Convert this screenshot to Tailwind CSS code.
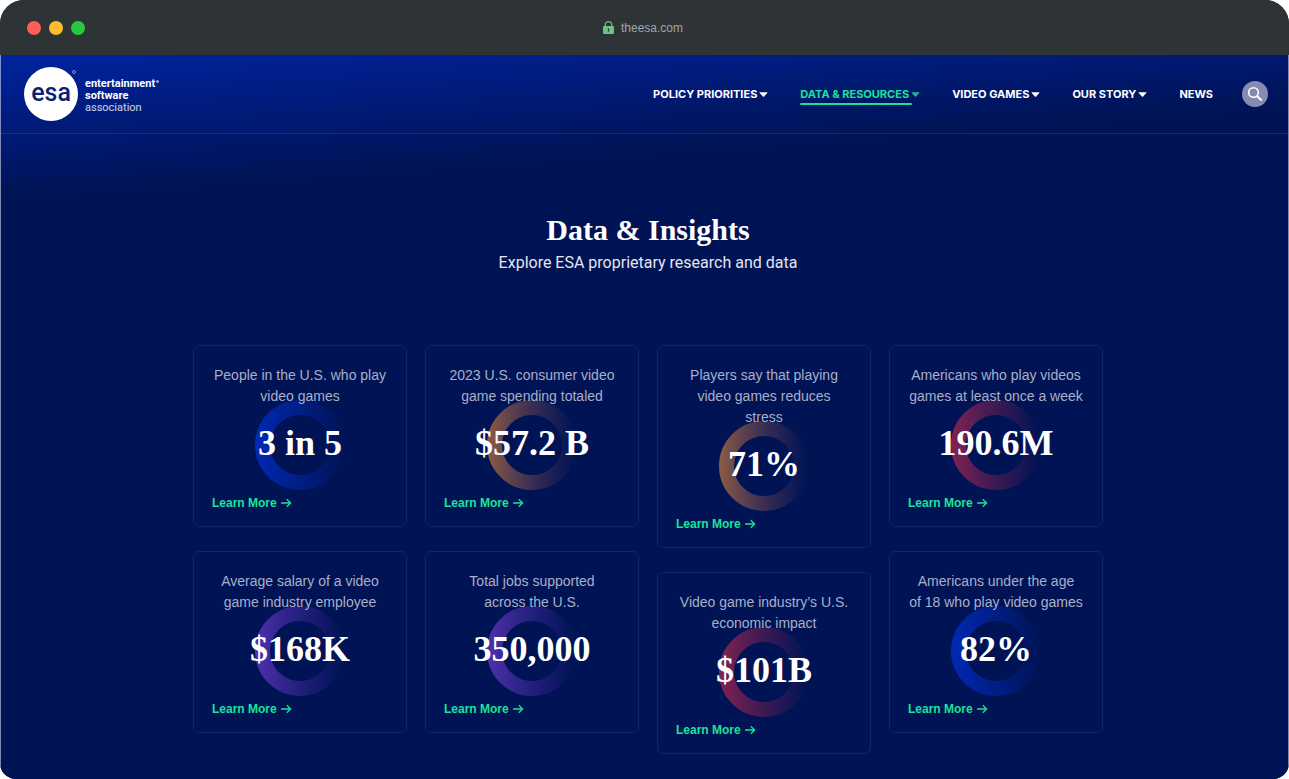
<!DOCTYPE html>
<html lang="en">
<head>
<meta charset="utf-8">
<meta name="viewport" content="width=device-width, initial-scale=1">
<title>Data &amp; Insights</title>
<script src="https://cdn.jsdelivr.net/npm/@tailwindcss/browser@4"></script>
</head>
<body class="bg-white font-['Liberation_Sans',sans-serif]">
<svg class="absolute size-0" aria-hidden="true">
  <defs>
    <linearGradient id="blue" gradientUnits="userSpaceOnUse" x1="0" x2="90"><stop offset="0" stop-color="#0029b4"/><stop offset="1" stop-color="#0029b4" stop-opacity="0"/></linearGradient>
    <linearGradient id="orange" gradientUnits="userSpaceOnUse" x1="0" x2="90"><stop offset="0" stop-color="#8d5b44"/><stop offset="1" stop-color="#5b3a5c" stop-opacity="0"/></linearGradient>
    <linearGradient id="red" gradientUnits="userSpaceOnUse" x1="0" x2="90"><stop offset="0" stop-color="#832250"/><stop offset="1" stop-color="#6b1f55" stop-opacity="0"/></linearGradient>
    <linearGradient id="purple" gradientUnits="userSpaceOnUse" x1="0" x2="90"><stop offset="0" stop-color="#5030ac"/><stop offset="1" stop-color="#3c28a0" stop-opacity="0"/></linearGradient>
    <symbol id="arrow" viewBox="0 0 12 10"><path d="M1 5h9.5M6.8 1.3L10.6 5 6.8 8.7" fill="none" stroke="currentColor" stroke-width="1.3"/></symbol>
    <symbol id="caret" viewBox="0 0 9 5"><path d="M1 0.3h7q.8 0 .3.7L5.1 4.4q-.6.6-1.2 0L.7 1Q.2.3 1 .3z" fill="currentColor"/></symbol>
  </defs>
</svg>
<div class="flex min-h-screen flex-col overflow-hidden rounded-t-3xl rounded-b-2xl bg-[#001354]">
  <div class="flex h-[55px] items-center bg-[#2e3336] pr-[30px] pl-[27px]">
    <div class="flex flex-1 gap-2">
      <span class="size-3.5 rounded-full bg-[#ff5f57]"></span>
      <span class="size-3.5 rounded-full bg-[#febc2e]"></span>
      <span class="size-3.5 rounded-full bg-[#28c840]"></span>
    </div>
    <div class="flex items-center gap-[7px] text-xs text-[#a3a5a7]">
      <svg class="h-[13px] w-[11px]" viewBox="0 0 11 13"><path d="M2.3 6V3.8a3.2 3.2 0 0 1 6.4 0V6" fill="none" stroke="#6cc283" stroke-width="1.2"/><rect y="5" width="11" height="8" rx="1" fill="#6cc283"/><path d="M5.5 8v2" stroke="#2e3336" stroke-width="1.3" stroke-linecap="round"/></svg>
      <span>theesa.com</span>
    </div>
    <div class="flex-1"></div>
  </div>

  <div class="flex-1 border-x border-white/50 bg-[linear-gradient(176deg,#00249e_0px,#001c80_60px,#001354_145px)] bg-origin-border">
    <header class="flex h-[79px] items-center justify-between border-b border-white/10 pr-5 pl-[23px]">
      <a href="#" class="flex items-center gap-[7px] font-['Roboto',sans-serif] text-white" aria-label="entertainment software association">
        <span class="relative flex size-[54px] items-center justify-center rounded-full bg-white pb-1 text-[25px] leading-none font-medium text-[#0a1f78]">esa<span class="absolute top-[3px] right-0.5 size-1 rounded-full border border-white/50"></span></span>
        <span class="pt-1 text-[11px] leading-3"><b class="flex">entertainment<span class="mt-0.5 ml-px size-[3px] rounded-full bg-white/60"></span></b><b class="block">software</b><span class="block text-white/80">association</span></span>
      </a>
      <nav class="flex items-center gap-8 font-['Inter',sans-serif] text-[11px] leading-4 font-bold text-white">
        <a href="#" class="flex items-center gap-0.5">POLICY PRIORITIES<svg class="h-[5px] w-[9px]"><use href="#caret"/></svg></a>
        <a href="#" class="relative flex items-center gap-0.5 text-[#1be29a]">DATA &amp; RESOURCES<svg class="h-[5px] w-[9px] opacity-80"><use href="#caret"/></svg><span class="absolute right-2 -bottom-[3px] left-0 h-0.5 rounded-full bg-[#1be29a]"></span></a>
        <a href="#" class="flex items-center gap-0.5">VIDEO GAMES<svg class="h-[5px] w-[9px]"><use href="#caret"/></svg></a>
        <a href="#" class="flex items-center gap-0.5">OUR STORY<svg class="h-[5px] w-[9px]"><use href="#caret"/></svg></a>
        <a href="#">NEWS</a>
        <button aria-label="Search" class="-ml-[3px] flex size-[26px] items-center justify-center rounded-full bg-[#858bb3]"><svg class="size-4" viewBox="0 0 16 16" fill="none" stroke="#fff"><circle cx="6.5" cy="6.5" r="4.8" stroke-width="1.6"/><path d="M10.2 10.2l3.8 3.6" stroke-width="2.2" stroke-linecap="round"/></svg></button>
      </nav>
    </header>

    <main class="pt-[76px] pl-[7px] text-center">
      <h1 class="font-['Liberation_Serif',serif] text-[30px] leading-10 font-bold text-white">Data &amp; Insights</h1>
      <p class="font-['Roboto',sans-serif] text-base leading-[26px] text-[#e3e5ee]">Explore ESA proprietary research and data</p>

      <div class="mx-auto mt-[69px] grid max-w-[910px] grid-cols-4 items-start gap-[18px]">
        <div class="flex flex-col gap-6">
          <article class="rounded-md border border-[#14255f] px-[18px] pt-[19px] pb-[13px]">
            <p class="relative z-10 -mx-2 text-sm leading-[21px] text-[#a9afc9]">People in the U.S. who play<br>video games</p>
            <div class="relative flex h-[77px] items-center justify-center pb-1.5"><svg class="absolute -top-[7px] left-1/2 size-[90px] -translate-x-1/2" viewBox="0 0 90 90"><circle cx="45" cy="45" r="37.5" fill="none" stroke="url(#blue)" stroke-width="15"/></svg><strong class="relative font-['Liberation_Serif',serif] text-4xl text-white">3 in 5</strong></div>
            <a href="#" class="mt-[9px] flex items-center gap-[3px] text-xs leading-5 font-bold text-[#1be29a]">Learn More<svg class="h-2.5 w-3"><use href="#arrow"/></svg></a>
          </article>
          <article class="rounded-md border border-[#14255f] px-[18px] pt-[19px] pb-[13px]">
            <p class="relative z-10 -mx-2 text-sm leading-[21px] text-[#a9afc9]">Average salary of a video<br>game industry employee</p>
            <div class="relative flex h-[77px] items-center justify-center pb-1.5"><svg class="absolute -top-[7px] left-1/2 size-[90px] -translate-x-1/2" viewBox="0 0 90 90"><circle cx="45" cy="45" r="37.5" fill="none" stroke="url(#purple)" stroke-width="15"/></svg><strong class="relative font-['Liberation_Serif',serif] text-4xl text-white">$168K</strong></div>
            <a href="#" class="mt-[9px] flex items-center gap-[3px] text-xs leading-5 font-bold text-[#1be29a]">Learn More<svg class="h-2.5 w-3"><use href="#arrow"/></svg></a>
          </article>
        </div>
        <div class="flex flex-col gap-6">
          <article class="rounded-md border border-[#14255f] px-[18px] pt-[19px] pb-[13px]">
            <p class="relative z-10 -mx-2 text-sm leading-[21px] text-[#a9afc9]">2023 U.S. consumer video<br>game spending totaled</p>
            <div class="relative flex h-[77px] items-center justify-center pb-1.5"><svg class="absolute -top-[7px] left-1/2 size-[90px] -translate-x-1/2" viewBox="0 0 90 90"><circle cx="45" cy="45" r="37.5" fill="none" stroke="url(#orange)" stroke-width="15"/></svg><strong class="relative font-['Liberation_Serif',serif] text-4xl text-white">$57.2 B</strong></div>
            <a href="#" class="mt-[9px] flex items-center gap-[3px] text-xs leading-5 font-bold text-[#1be29a]">Learn More<svg class="h-2.5 w-3"><use href="#arrow"/></svg></a>
          </article>
          <article class="rounded-md border border-[#14255f] px-[18px] pt-[19px] pb-[13px]">
            <p class="relative z-10 -mx-2 text-sm leading-[21px] text-[#a9afc9]">Total jobs supported<br>across the U.S.</p>
            <div class="relative flex h-[77px] items-center justify-center pb-1.5"><svg class="absolute -top-[7px] left-1/2 size-[90px] -translate-x-1/2" viewBox="0 0 90 90"><circle cx="45" cy="45" r="37.5" fill="none" stroke="url(#purple)" stroke-width="15"/></svg><strong class="relative font-['Liberation_Serif',serif] text-4xl text-white">350,000</strong></div>
            <a href="#" class="mt-[9px] flex items-center gap-[3px] text-xs leading-5 font-bold text-[#1be29a]">Learn More<svg class="h-2.5 w-3"><use href="#arrow"/></svg></a>
          </article>
        </div>
        <div class="flex flex-col gap-6">
          <article class="rounded-md border border-[#14255f] px-[18px] pt-[19px] pb-[13px]">
            <p class="relative z-10 -mx-2 text-sm leading-[21px] text-[#a9afc9]">Players say that playing<br>video games reduces<br>stress</p>
            <div class="relative flex h-[77px] items-center justify-center pb-1.5"><svg class="absolute -top-[7px] left-1/2 size-[90px] -translate-x-1/2" viewBox="0 0 90 90"><circle cx="45" cy="45" r="37.5" fill="none" stroke="url(#orange)" stroke-width="15"/></svg><strong class="relative font-['Liberation_Serif',serif] text-4xl text-white">71%</strong></div>
            <a href="#" class="mt-[9px] flex items-center gap-[3px] text-xs leading-5 font-bold text-[#1be29a]">Learn More<svg class="h-2.5 w-3"><use href="#arrow"/></svg></a>
          </article>
          <article class="rounded-md border border-[#14255f] px-[18px] pt-[19px] pb-[13px]">
            <p class="relative z-10 -mx-2 text-sm leading-[21px] text-[#a9afc9]">Video game industry’s U.S.<br>economic impact</p>
            <div class="relative flex h-[77px] items-center justify-center pb-1.5"><svg class="absolute -top-[7px] left-1/2 size-[90px] -translate-x-1/2" viewBox="0 0 90 90"><circle cx="45" cy="45" r="37.5" fill="none" stroke="url(#red)" stroke-width="15"/></svg><strong class="relative font-['Liberation_Serif',serif] text-4xl text-white">$101B</strong></div>
            <a href="#" class="mt-[9px] flex items-center gap-[3px] text-xs leading-5 font-bold text-[#1be29a]">Learn More<svg class="h-2.5 w-3"><use href="#arrow"/></svg></a>
          </article>
        </div>
        <div class="flex flex-col gap-6">
          <article class="rounded-md border border-[#14255f] px-[18px] pt-[19px] pb-[13px]">
            <p class="relative z-10 -mx-2 text-sm leading-[21px] text-[#a9afc9]">Americans who play videos<br>games at least once a week</p>
            <div class="relative flex h-[77px] items-center justify-center pb-1.5"><svg class="absolute -top-[7px] left-1/2 size-[90px] -translate-x-1/2" viewBox="0 0 90 90"><circle cx="45" cy="45" r="37.5" fill="none" stroke="url(#red)" stroke-width="15"/></svg><strong class="relative font-['Liberation_Serif',serif] text-4xl text-white">190.6M</strong></div>
            <a href="#" class="mt-[9px] flex items-center gap-[3px] text-xs leading-5 font-bold text-[#1be29a]">Learn More<svg class="h-2.5 w-3"><use href="#arrow"/></svg></a>
          </article>
          <article class="rounded-md border border-[#14255f] px-[18px] pt-[19px] pb-[13px]">
            <p class="relative z-10 -mx-2 text-sm leading-[21px] text-[#a9afc9]">Americans under the age<br>of 18 who play video games</p>
            <div class="relative flex h-[77px] items-center justify-center pb-1.5"><svg class="absolute -top-[7px] left-1/2 size-[90px] -translate-x-1/2" viewBox="0 0 90 90"><circle cx="45" cy="45" r="37.5" fill="none" stroke="url(#blue)" stroke-width="15"/></svg><strong class="relative font-['Liberation_Serif',serif] text-4xl text-white">82%</strong></div>
            <a href="#" class="mt-[9px] flex items-center gap-[3px] text-xs leading-5 font-bold text-[#1be29a]">Learn More<svg class="h-2.5 w-3"><use href="#arrow"/></svg></a>
          </article>
        </div>
      </div>
    </main>
  </div>
</div>
</body>
</html>
